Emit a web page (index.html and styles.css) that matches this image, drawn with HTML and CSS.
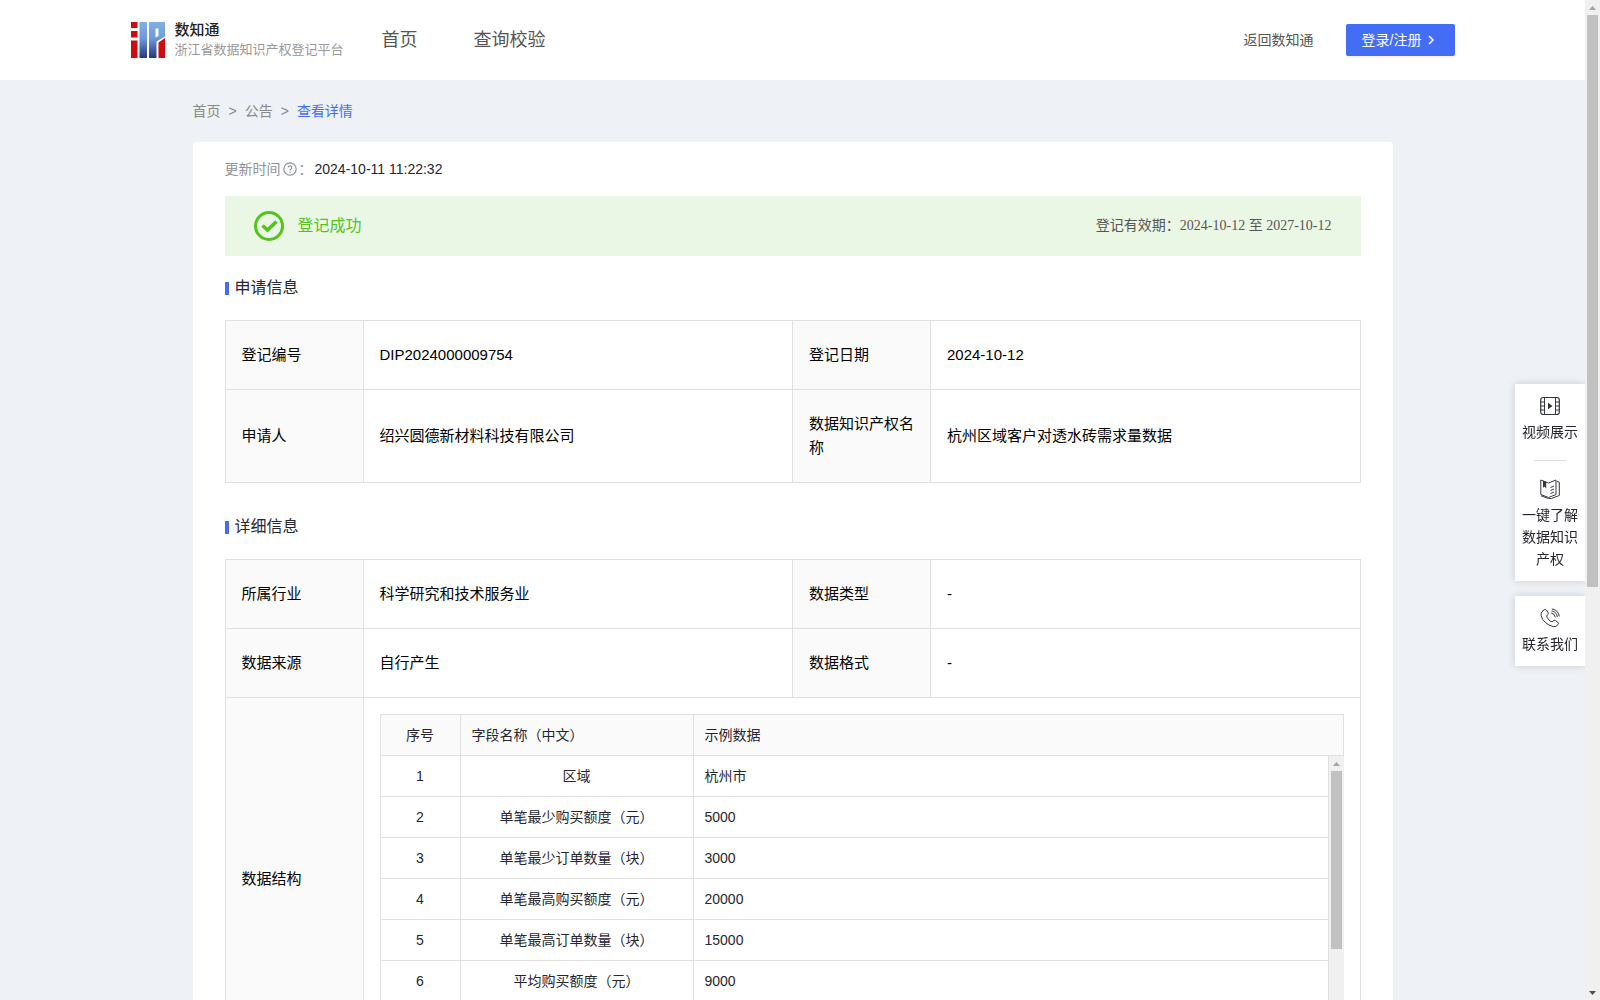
FILE: index.html
```html
<!DOCTYPE html>
<html lang="zh-CN">
<head>
  <meta charset="UTF-8" />
  <meta name="viewport" content="width=device-width, initial-scale=1.0"/>
  <title>浙江省数据知识产权登记平台</title>
  <link rel="stylesheet" href="styles.css">
</head>
<body>

  <header class="header">
    <div class="header-inner">
      <a class="logo" href="#">
        <svg width="34" height="36" viewBox="0 0 34 36" aria-hidden="true">
          <defs>
            <linearGradient id="logo-blue" x1="0" y1="0" x2="0" y2="1">
              <stop offset="0" stop-color="#7fb0e6"/>
              <stop offset="0.45" stop-color="#6c9bdb"/>
              <stop offset="1" stop-color="#24377f"/>
            </linearGradient>
          </defs>
          <path fill="#cf0a10" d="M0 0h6.500v6H0zM0 9h6.500v6.500H0zM0 18.500h6.500V36H0z"/>
          <path fill="url(#logo-blue)" d="M8.500 0H16v36H8.500zM18 0h16v14.500l-8.500 5V36H18z"/>
          <path fill="#fff" d="M24.500 6.500h3v7.500l-3 1.500z"/>
          <path fill="#cf0a10" d="M27.500 20.500L34 16v20h-6.500z"/>
        </svg>
        <span class="logo-text">
          <strong>数知通</strong>
          <span>浙江省数据知识产权登记平台</span>
        </span>
      </a>
      <nav class="nav">
        <a href="#">首页</a>
        <a href="#">查询校验</a>
      </nav>
      <a class="back" href="#">返回数知通</a>
      <button class="login" type="button">登录/注册
        <svg width="10" height="10" viewBox="0 0 10 10" aria-hidden="true"><path d="M3 1l4 4-4 4" fill="none" stroke="#fff" stroke-width="1.500"/></svg>
      </button>
    </div>
  </header>

  <main class="container">
    <nav class="breadcrumb">
      <a href="#">首页</a><span>&gt;</span><a href="#">公告</a><span>&gt;</span><a class="current" href="#">查看详情</a>
    </nav>

    <div class="card">
      <div class="update">
        <span>更新时间</span>
        <svg width="14" height="14" viewBox="0 0 14 14" fill="none" stroke="#909399" aria-hidden="true">
          <circle cx="7" cy="7" r="6.200" stroke-width="1.200"/>
          <path d="M5.200 5.600a1.800 1.800 0 1 1 2.600 1.600q-.8.400-.8 1.200M7 9.500v1.200" stroke-width="1.200"/>
        </svg>
        <span>：</span>
        <time>2024-10-11 11:22:32</time>
      </div>

      <div class="status">
        <svg width="30" height="30" viewBox="0 0 30 30" fill="none" stroke="#52c41a" aria-hidden="true">
          <circle cx="15" cy="15" r="13.500" stroke-width="3"/>
          <path d="M8.500 14.500l5 4.500 9-8.500" stroke-width="3.600"/>
        </svg>
        <span class="status-text">登记成功</span>
        <span class="status-date">登记有效期：2024-10-12 至 2027-10-12</span>
      </div>

      <h2 class="section-title">申请信息</h2>
      <table class="info">
        <colgroup><col class="col-label"><col><col class="col-label"><col></colgroup>
        <tbody>
          <tr>
            <th scope="row">登记编号</th><td>DIP2024000009754</td>
            <th scope="row">登记日期</th><td>2024-10-12</td>
          </tr>
          <tr>
            <th scope="row">申请人</th><td>绍兴圆德新材料科技有限公司</td>
            <th scope="row">数据知识产权名称</th><td>杭州区域客户对透水砖需求量数据</td>
          </tr>
        </tbody>
      </table>

      <h2 class="section-title">详细信息</h2>
      <table class="info">
        <colgroup><col class="col-label"><col><col class="col-label"><col></colgroup>
        <tbody>
          <tr>
            <th scope="row">所属行业</th><td>科学研究和技术服务业</td>
            <th scope="row">数据类型</th><td>-</td>
          </tr>
          <tr>
            <th scope="row">数据来源</th><td>自行产生</td>
            <th scope="row">数据格式</th><td>-</td>
          </tr>
          <tr>
            <th scope="row">数据结构</th>
            <td class="nested" colspan="3">
              <table class="fields">
                <colgroup><col class="col-no"><col class="col-name"><col></colgroup>
                <thead>
                  <tr><th scope="col">序号</th><th scope="col">字段名称（中文）</th><th scope="col">示例数据</th></tr>
                </thead>
              </table>
              <div class="fields-body">
                <div class="fields-view">
                  <table class="fields">
                    <colgroup><col class="col-no"><col class="col-name"><col></colgroup>
                    <tbody>
                      <tr><td>1</td><td>区域</td><td>杭州市</td></tr>
                      <tr><td>2</td><td>单笔最少购买额度（元）</td><td>5000</td></tr>
                      <tr><td>3</td><td>单笔最少订单数量（块）</td><td>3000</td></tr>
                      <tr><td>4</td><td>单笔最高购买额度（元）</td><td>20000</td></tr>
                      <tr><td>5</td><td>单笔最高订单数量（块）</td><td>15000</td></tr>
                      <tr><td>6</td><td>平均购买额度（元）</td><td>9000</td></tr>
                      <tr><td>7</td><td>-</td><td>-</td></tr>
                    </tbody>
                  </table>
                </div>
                <div class="scrollbar" aria-hidden="true">
                  <svg width="15" height="15" viewBox="0 0 15 15"><path d="M4 10l3.500-4 3.500 4z" fill="#a3a3a3"/></svg>
                  <div class="scrollbar-track"><div class="scrollbar-thumb thumb-fields"></div></div>
                  <svg width="15" height="15" viewBox="0 0 15 15"><path d="M4 6l3.500 4L11 6z" fill="#505050"/></svg>
                </div>
              </div>
            </td>
          </tr>
        </tbody>
      </table>
    </div>
  </main>

  <aside class="side">
    <div class="side-box">
      <a href="#">
        <svg width="20" height="20" viewBox="0 0 20 20" fill="none" stroke="#33363d" aria-hidden="true">
          <rect x="0.700" y="1.500" width="18.600" height="17" rx="2.500" stroke-width="1.200"/>
          <path d="M4.500 1.500v17M15.500 1.500v17M1 6h3.500M1 10h3.500M1 14h3.500M15.500 6H19M15.500 10H19M15.500 14H19"/>
          <path d="M8 6.800l4.500 3.200L8 13.200z" fill="#33363d" stroke="none"/>
        </svg>
        <span>视频展示</span>
      </a>
      <a href="#">
        <svg width="20" height="20" viewBox="0 0 20 20" fill="none" stroke="#33363d" stroke-linejoin="round" aria-hidden="true">
          <path d="M.8 1l7.700 3 7.500-3v14.500L8.500 18.500.8 15.500zM17 2.500l2.300.7v13.300L11.500 19.500h-3L1 16.800"/>
          <path d="M3 1.800v7l1.700-1.300L6.200 10V3z" fill="#33363d" stroke="none"/>
          <path d="M10.500 8.500l3.500-1.500M10.500 11.500l3.500-1.500M10.500 14.500l3.500-1.500"/>
        </svg>
        <span>一键了解数据知识产权</span>
      </a>
    </div>
    <div class="side-box">
      <a href="#">
        <svg width="20" height="20" viewBox="0 0 20 20" fill="none" stroke="#33363d" stroke-linejoin="round" stroke-linecap="round" aria-hidden="true">
          <path d="M2.500 3.200L4.200 1.700q1.200-.9 2.200.3L8 4.400q.8 1.200-.3 2.200-1.500 1.200-.7 2.700 1.400 2.700 3.900 4.200 1.200.6 2.200-.5 1-1.200 2.200-.5l2.500 1.700q1.300 1 .3 2.200-2 3-5 2.200Q3.800 16 1.100 7.800.4 5 2.500 3.200z"/>
          <path d="M11.500 5q3.300.5 3.800 4M12 3q4.700.8 5.300 5.500M12.200 1q6.200 1 7 7"/>
        </svg>
        <span>联系我们</span>
      </a>
    </div>
  </aside>

  <div class="scrollbar scrollbar-page" aria-hidden="true">
    <svg width="15" height="15" viewBox="0 0 15 15"><path d="M4 10l3.500-4 3.500 4z" fill="#a3a3a3"/></svg>
    <div class="scrollbar-track"><div class="scrollbar-thumb thumb-page"></div></div>
    <svg width="15" height="15" viewBox="0 0 15 15"><path d="M4 6l3.500 4L11 6z" fill="#505050"/></svg>
  </div>

</body>
</html>
```
FILE: styles.css
```css
* {
  box-sizing: border-box;
}
body {
  margin: 0;
  padding-right: 15px;
  background: #eef2f6;
  color: #252631;
  font-family: "Liberation Sans", "Noto Sans CJK SC", sans-serif;
  font-size: 14px;
  line-height: 22px;
}
a {
  color: inherit;
  text-decoration: none;
}
svg {
  display: block;
  flex: none;
}
table {
  width: 100%;
  border-collapse: separate;
  border-spacing: 0;
  table-layout: fixed;
}
th {
  font-weight: normal;
  text-align: left;
}

/* Scrollbars */
.scrollbar {
  display: flex;
  flex: none;
  flex-direction: column;
  width: 15px;
  background: #f0f0f0;
}
.scrollbar-track {
  flex: 1;
  padding: 0 2px;
}
.scrollbar-thumb {
  background: #c1c1c1;
}
.thumb-page {
  height: 59%;
}
.thumb-fields {
  height: 69%;
}
.scrollbar-page {
  position: fixed;
  top: 0;
  right: 0;
  bottom: 0;
}

/* Header */
.header {
  background: #fff;
}
.header-inner {
  display: flex;
  align-items: center;
  max-width: 1324px;
  height: 80px;
  margin: 0 auto;
}
.logo {
  display: flex;
  align-items: center;
  gap: 10px;
}
.logo-text {
  display: flex;
  flex-direction: column;
  color: #999;
  font-size: 13px;
  line-height: 20px;
}
.logo-text strong {
  color: #222;
  font-size: 15px;
  font-weight: 500;
}
.nav {
  display: flex;
  gap: 56px;
  margin-left: 38px;
  color: #555;
  font-size: 18px;
}
.back {
  margin-left: auto;
  color: #555;
}
.login {
  display: flex;
  align-items: center;
  gap: 4px;
  height: 32px;
  margin-left: 32px;
  padding: 0 19px 0 16px;
  border: 0;
  border-radius: 2px;
  background: #446df6;
  box-shadow: 0 2px 0 rgba(0,0,0,0.04);
  color: #fff;
  font: inherit;
}

/* Content */
.container {
  max-width: 1200px;
  margin: 0 auto;
  padding-bottom: 40px;
}
.breadcrumb {
  display: flex;
  gap: 8px;
  padding: 20px 0;
  color: #888;
}
.breadcrumb .current {
  color: #446df6;
}
.card {
  padding: 16px 32px 32px;
  border-radius: 4px;
  background: #fff;
}
.update {
  display: flex;
  align-items: center;
  gap: 2px;
  color: #909399;
}
.update time {
  color: #252631;
}
.status {
  display: flex;
  align-items: center;
  height: 60px;
  margin-top: 16px;
  padding: 0 29px;
  background: #ebf7e5;
}
.status-text {
  margin-left: 14px;
  color: #52c41a;
  font-size: 16px;
}
.status-date {
  margin-left: auto;
  color: #555;
  font-family: "Liberation Serif", "Noto Sans CJK SC", serif;
}
.section-title {
  display: flex;
  align-items: center;
  gap: 6px;
  margin: 0;
  padding: 20px 0;
  font-size: 16px;
  font-weight: normal;
  line-height: 24px;
}
.section-title::before {
  content: "";
  width: 4px;
  height: 13px;
  background: #446df6;
}
.info + .section-title {
  padding-top: 32px;
}

/* Info table */
.info {
  border: solid #e0e0e0;
  border-width: 1px 0 0 1px;
  color: #000;
  font-size: 15px;
  line-height: 24px;
}
.info .col-label {
  width: 138px;
}
.info > tbody > tr > th,
.info > tbody > tr > td {
  padding: 22px 16px;
  border: solid #e0e0e0;
  border-width: 0 1px 1px 0;
}
.info > tbody > tr > th {
  background: #fafafa;
}
.info > tbody > tr > .nested {
  padding: 16px;
}

/* Field list */
.fields {
  color: #252631;
  font-size: 14px;
  line-height: 22px;
}
.fields .col-no {
  width: 81px;
}
.fields .col-name {
  width: 233px;
}
.fields th,
.fields td {
  padding: 9px 11px;
  border: solid #e0e0e0;
  border-width: 0 1px 1px 0;
}
.fields th:first-child,
.fields td:first-child {
  border-left-width: 1px;
  text-align: center;
}
.fields th {
  border-top-width: 1px;
  background: #fafafa;
}
.fields td:nth-child(2) {
  text-align: center;
}
.fields-body {
  display: flex;
  height: 288px;
}
.fields-view {
  flex: 1;
  overflow: hidden;
}

/* Floating menu */
.side {
  position: fixed;
  top: 384px;
  right: 15px;
  display: flex;
  flex-direction: column;
  gap: 15px;
  width: 70px;
}
.side-box {
  padding: 12px 7px 11px;
  background: #fff;
  box-shadow: 0 0 8px rgba(0,0,0,0.16);
  text-align: center;
}
.side-box a {
  display: flex;
  flex-direction: column;
  align-items: center;
  gap: 5px;
}
.side-box a + a::before {
  content: "";
  width: 32px;
  height: 1px;
  margin: 17px 0 13px;
  background: #ddd;
}
```
